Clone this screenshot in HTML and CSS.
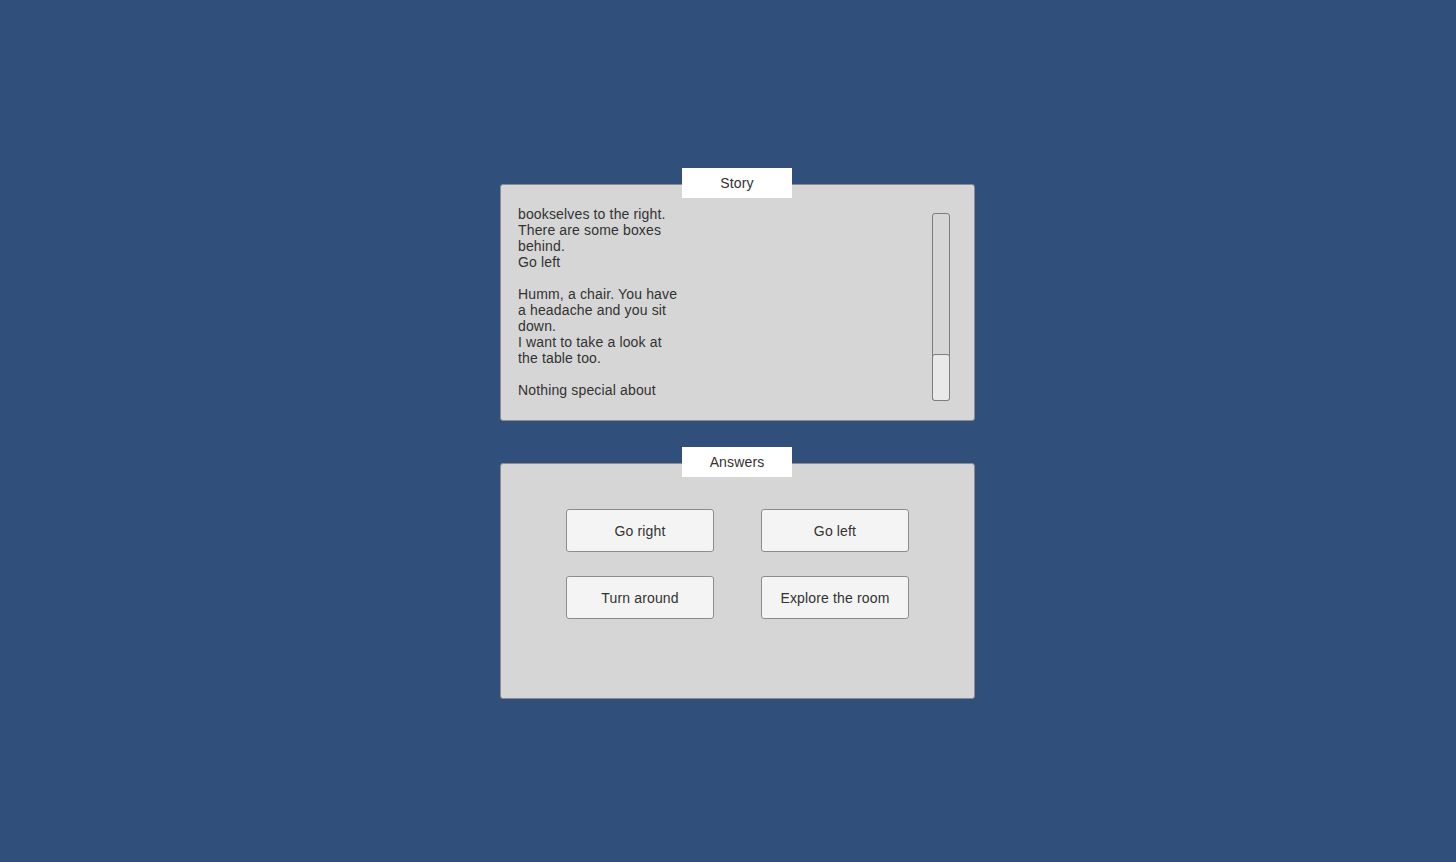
FILE: index.html
```html
<!DOCTYPE html>
<html>
<head>
<meta charset="utf-8">
<link rel="stylesheet" href="styles.css">
</head>
<body>
<main class="stage">
  <section class="panel story">
    <div class="tab">Story</div>
    <div class="story-body">
      <div class="story-text">bookselves to the right.
There are some boxes
behind.
Go left

Humm, a chair. You have
a headache and you sit
down.
I want to take a look at
the table too.

Nothing special about</div>
      <div class="scrollbar"><div class="thumb"></div></div>
    </div>
  </section>
  <section class="panel answers">
    <div class="tab">Answers</div>
    <div class="buttons">
      <button class="btn">Go right</button>
      <button class="btn">Go left</button>
      <button class="btn">Turn around</button>
      <button class="btn">Explore the room</button>
    </div>
  </section>
</main>
</body>
</html>
```
FILE: styles.css
```css
html, body {
  margin: 0;
  height: 100%;
  background: #304f7a;
  font-family: "Liberation Sans", Arial, sans-serif;
  color: #323232;
}
.stage {
  display: flex;
  flex-direction: column;
  width: 475px;
  margin-left: 500px;
  padding-top: 184px;
  gap: 42px;
}
.panel {
  position: relative;
  box-sizing: border-box;
  background: #d6d6d6;
  border: 1px solid #8c8c8c;
  border-radius: 3px;
}
.story { height: 237px; }
.answers { height: 236px; }
.tab {
  position: absolute;
  left: 181px;
  top: -17px;
  width: 110px;
  height: 30px;
  background: #ffffff;
  font-size: 14px;
  letter-spacing: 0.15px;
  line-height: 30px;
  text-align: center;
  color: #323232;
}
.story-body {
  display: flex;
  justify-content: space-between;
  padding: 21px 24px 0 17px;
  height: 215px;
  box-sizing: border-box;
}
.story-text {
  white-space: pre;
  font-size: 14px;
  letter-spacing: 0.15px;
  line-height: 16px;
  height: 194px;
  overflow: hidden;
}
.scrollbar {
  margin-top: 7px;
  width: 18px;
  height: 188px;
  box-sizing: border-box;
  border: 1px solid #7d7d7d;
  border-radius: 3px;
  display: flex;
  flex-direction: column;
  justify-content: flex-end;
}
.thumb {
  height: 47px;
  margin: 0 -1px -1px;
  box-sizing: border-box;
  border: 1px solid #7d7d7d;
  border-radius: 3px;
  background: #e9e9e9;
}
.buttons {
  display: grid;
  grid-template-columns: 148px 148px;
  column-gap: 47px;
  row-gap: 24px;
  padding: 45px 0 0 65px;
}
.btn {
  height: 43px;
  box-sizing: border-box;
  background: #f4f4f4;
  border: 1px solid #8c8c8c;
  border-radius: 3px;
  font-family: "Liberation Sans", Arial, sans-serif;
  font-size: 14px;
  letter-spacing: 0.15px;
  color: #323232;
  padding: 0;
}
```
